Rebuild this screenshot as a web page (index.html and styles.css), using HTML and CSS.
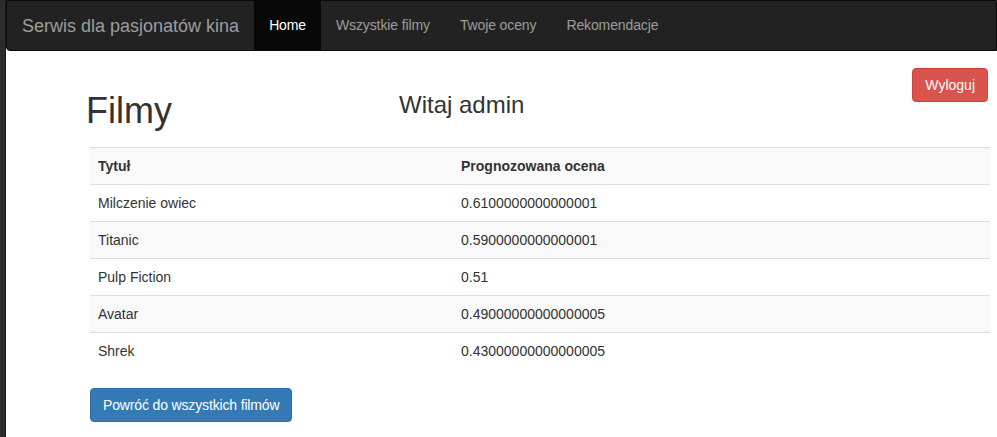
FILE: index.html
```html
<!DOCTYPE html>
<html lang="pl">
<head>
<meta charset="utf-8">
<title>Serwis dla pasjonatów kina</title>
<link rel="stylesheet" href="styles.css">
</head>
<body>
<div class="strip"></div>
<div class="main">
  <nav class="navbar">
    <a class="brand" href="#">Serwis dla pasjonatów kina</a>
    <ul class="nav">
      <li class="active"><a href="#">Home</a></li>
      <li><a href="#">Wszystkie filmy</a></li>
      <li><a href="#">Twoje oceny</a></li>
      <li><a href="#">Rekomendacje</a></li>
    </ul>
  </nav>
  <div class="content">
    <div class="top-row">
      <div class="headings">
        <h1>Filmy</h1>
        <h3>Witaj admin</h3>
      </div>
      <button class="btn btn-danger">Wyloguj</button>
    </div>
    <table class="table">
      <tbody>
        <tr><th class="col1">Tytuł</th><th>Prognozowana ocena</th></tr>
        <tr><td>Milczenie owiec</td><td>0.6100000000000001</td></tr>
        <tr><td>Titanic</td><td>0.5900000000000001</td></tr>
        <tr><td>Pulp Fiction</td><td>0.51</td></tr>
        <tr><td>Avatar</td><td>0.49000000000000005</td></tr>
        <tr><td>Shrek</td><td>0.43000000000000005</td></tr>
      </tbody>
    </table>
    <button class="btn btn-primary">Powróć do wszystkich filmów</button>
  </div>
</div>
</body>
</html>
```
FILE: styles.css
```css
html, body {
  margin: 0;
  padding: 0;
  height: 100%;
}
body {
  display: flex;
  background: #fff;
  font-family: "Liberation Sans", Arial, sans-serif;
  font-size: 14px;
  line-height: 20px;
  color: #333;
}
.strip {
  width: 6px;
  flex: 0 0 6px;
  background: #2b2b2b;
  border-right: 1px solid #1a1a1a;
  box-sizing: border-box;
}
.main {
  flex: 1;
  min-width: 0;
}
.navbar {
  display: flex;
  height: 51px;
  box-sizing: border-box;
  background: #222;
  border: 1px solid #080808;
  border-radius: 0 0 0 4px;
}
.brand {
  padding: 15px 15px;
  font-size: 18px;
  line-height: 20px;
  height: 50px;
  box-sizing: border-box;
  color: #9d9d9d;
  text-decoration: none;
}
.nav {
  display: flex;
  list-style: none;
  margin: 0;
  padding: 0;
}
.nav li a {
  display: block;
  padding: 15px;
  line-height: 19px;
  color: #9d9d9d;
  text-decoration: none;
  letter-spacing: -0.12px;
}
.nav li.active a {
  background: #080808;
  color: #fff;
}
.content {
  padding: 17px 9px 0 84px;
}
.top-row {
  display: flex;
  justify-content: space-between;
  align-items: flex-start;
}
.headings {
  display: grid;
  grid-template-columns: 313px auto;
  margin-top: 23px;
  margin-left: -4px;
}
h1 {
  margin: 0;
  font-size: 36px;
  line-height: 1.1;
  font-weight: 500;
}
h3 {
  margin: 1px 0 0 0;
  font-size: 24px;
  line-height: 1.1;
  font-weight: 500;
}
.btn {
  display: inline-block;
  font-family: inherit;
  font-size: 14px;
  line-height: 20px;
  padding: 6px 12px;
  border: 1px solid transparent;
  border-radius: 4px;
  color: #fff;
  cursor: pointer;
}
.btn-danger {
  background: #d9534f;
  border-color: #d43f3a;
}
.btn-primary {
  background: #337ab7;
  border-color: #2e6da4;
  margin-top: 19px;
  letter-spacing: -0.15px;
}
.table {
  width: 900px;
  margin-top: 16px;
  border-collapse: collapse;
  border-spacing: 0;
}
.table th, .table td {
  padding: 8px;
  text-align: left;
  border-top: 1px solid #ddd;
  line-height: 20px;
  vertical-align: top;
}
.table th {
  font-weight: bold;
}
.table .col1 {
  width: 347px;
}
.table tr:nth-child(odd) {
  background: #f9f9f9;
}
```
